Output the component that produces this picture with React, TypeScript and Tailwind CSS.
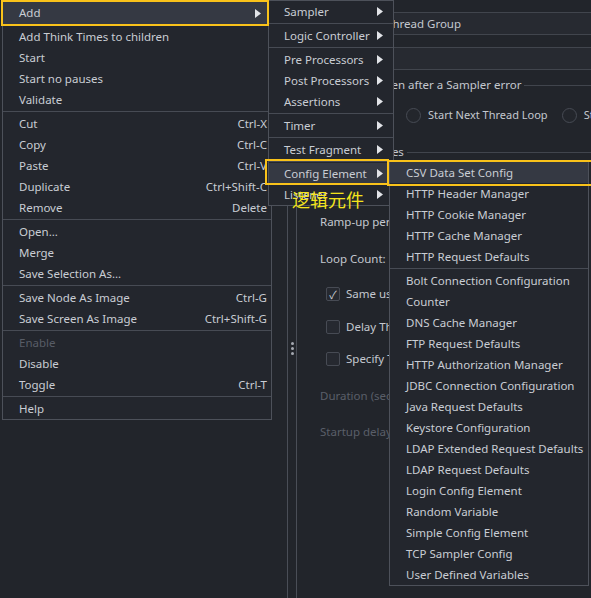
import React from 'react';

type Entry =
  | { label: string; keys?: string; sub?: boolean; disabled?: boolean; active?: boolean }
  | 'sep';

const MAIN: Entry[] = [
  { label: 'Add', sub: true, active: true },
  { label: 'Add Think Times to children' },
  { label: 'Start' },
  { label: 'Start no pauses' },
  { label: 'Validate' },
  'sep',
  { label: 'Cut', keys: 'Ctrl-X' },
  { label: 'Copy', keys: 'Ctrl-C' },
  { label: 'Paste', keys: 'Ctrl-V' },
  { label: 'Duplicate', keys: 'Ctrl+Shift-C' },
  { label: 'Remove', keys: 'Delete' },
  'sep',
  { label: 'Open...' },
  { label: 'Merge' },
  { label: 'Save Selection As...' },
  'sep',
  { label: 'Save Node As Image', keys: 'Ctrl-G' },
  { label: 'Save Screen As Image', keys: 'Ctrl+Shift-G' },
  'sep',
  { label: 'Enable', disabled: true },
  { label: 'Disable' },
  { label: 'Toggle', keys: 'Ctrl-T' },
  'sep',
  { label: 'Help' },
];

const ADD: Entry[] = [
  { label: 'Sampler', sub: true },
  'sep',
  { label: 'Logic Controller', sub: true },
  'sep',
  { label: 'Pre Processors', sub: true },
  { label: 'Post Processors', sub: true },
  { label: 'Assertions', sub: true },
  'sep',
  { label: 'Timer', sub: true },
  'sep',
  { label: 'Test Fragment', sub: true },
  'sep',
  { label: 'Config Element', sub: true, active: true },
  { label: 'Listener', sub: true },
];

const CONFIG: Entry[] = [
  { label: 'CSV Data Set Config', active: true },
  { label: 'HTTP Header Manager' },
  { label: 'HTTP Cookie Manager' },
  { label: 'HTTP Cache Manager' },
  { label: 'HTTP Request Defaults' },
  'sep',
  { label: 'Bolt Connection Configuration' },
  { label: 'Counter' },
  { label: 'DNS Cache Manager' },
  { label: 'FTP Request Defaults' },
  { label: 'HTTP Authorization Manager' },
  { label: 'JDBC Connection Configuration' },
  { label: 'Java Request Defaults' },
  { label: 'Keystore Configuration' },
  { label: 'LDAP Extended Request Defaults' },
  { label: 'LDAP Request Defaults' },
  { label: 'Login Config Element' },
  { label: 'Random Variable' },
  { label: 'Simple Config Element' },
  { label: 'TCP Sampler Config' },
  { label: 'User Defined Variables' },
];

function Arrow() {
  return (
    <svg width="6" height="9" viewBox="0 0 6 9" className="shrink-0">
      <polygon points="0,0 6,4.5 0,9" fill="#e2e4e8" />
    </svg>
  );
}

function MenuList({ items, pad, tall }: { items: Entry[]; pad: string; tall?: boolean }) {
  return (
    <>
      {items.map((it, i) =>
        it === 'sep' ? (
          <div key={i} className="flex h-[3px] items-center">
            <div className="h-px w-full bg-[#474b54]" />
          </div>
        ) : (
          <div
            key={i}
            className={`flex items-center pr-[4px] ${pad} ${it.active ? 'bg-[#353943]' : ''} ${
              it.active && tall ? 'mb-px h-[24px]' : 'h-[21px]'
            } ${it.disabled ? 'text-[#585d67]' : 'text-[#c9cdd4]'}`}
          >
            <span className="flex-1 whitespace-nowrap">{it.label}</span>
            {it.keys && <span className="whitespace-nowrap">{it.keys}</span>}
            {it.sub && (
              <span className="flex w-[12px] justify-start">
                <Arrow />
              </span>
            )}
          </div>
        ),
      )}
    </>
  );
}

function Field({ label }: { label: string }) {
  return (
    <div className="flex h-[23px] items-center">
      <span className="w-[60px] shrink-0">{label}</span>
      <div className="flex h-full flex-1 items-center border-y border-[#41454d] bg-[#272a31] pl-[6px]">
        {label === 'Name:' ? 'Thread Group' : ''}
      </div>
    </div>
  );
}

function Legend({ text, indent }: { text: string; indent: string }) {
  return (
    <div className={`flex h-[16px] items-center gap-[3px] ${indent}`}>
      <span className="whitespace-nowrap">{text}</span>
      <div className="h-px flex-1 bg-[#41454d]" />
    </div>
  );
}

function Radio({ label }: { label: string }) {
  return (
    <div className="flex shrink-0 items-center gap-[7px]">
      <span className="h-[15px] w-[15px] rounded-full border border-[#474b54] bg-[#23262c]" />
      <span className="whitespace-nowrap text-[11px]">{label}</span>
    </div>
  );
}

function Check({ label, on }: { label: string; on?: boolean }) {
  return (
    <div className="flex h-[24px] items-center gap-[6px] pl-[6px]">
      <span className="flex h-[14px] w-[14px] items-center justify-center rounded-[2px] border border-[#474b54] bg-[#262930] text-[11px] leading-none text-[#c9cdd4]">
        {on ? '✓' : ''}
      </span>
      <span className="whitespace-nowrap">{label}</span>
    </div>
  );
}

export default function App() {
  return (
    <div className="relative flex h-[598px] w-[591px] overflow-hidden bg-[#22252b] font-['Noto_Sans','Noto_Sans_CJK_SC',sans-serif] text-[11.5px] text-[#c4c8cf]">
      {/* tree panel + splitter */}
      <div className="w-[288px] shrink-0 border-r border-[#4a4e57]" />
      <div className="flex w-[9px] shrink-0 flex-col items-center gap-[2px] border-r border-[#4a4e57] pt-[342px]">
        <span className="h-[3px] w-[3px] rounded-full bg-[#a4a8b0]" />
        <span className="h-[3px] w-[3px] rounded-full bg-[#a4a8b0]" />
        <span className="h-[3px] w-[3px] rounded-full bg-[#a4a8b0]" />
      </div>

      {/* thread group form */}
      <div className="flex min-w-0 flex-1 flex-col overflow-hidden pl-[23px] pt-[12px]">
        <Field label="Name:" />
        <div className="mt-[12px]">
          <Field label="Comments:" />
        </div>
        <div className="mt-[7px]">
          <Legend text="Action to be taken after a Sampler error" indent="-ml-[13px]" />
        </div>
        <div className="mt-[12px] flex h-[20px] items-center gap-[14px] pl-[3px]">
          <Radio label="Continue" />
          <Radio label="Start Next Thread Loop" />
          <Radio label="Stop Thread" />
        </div>
        <div className="mt-[19px]">
          <Legend text="Thread Properties" indent="-ml-[13px]" />
        </div>
        <div className="mt-[13px] flex h-[24px] items-center">Number of Threads (users):</div>
        <div className="mt-[13px] flex h-[24px] items-center">Ramp-up period (seconds):</div>
        <div className="mt-[13px] flex h-[24px] items-center">Loop Count:</div>
        <div className="mt-[11px]">
          <Check label="Same user on each iteration" on />
        </div>
        <div className="mt-[9px]">
          <Check label="Delay Thread creation until needed" />
        </div>
        <div className="mt-[8px]">
          <Check label="Specify Thread lifetime" />
        </div>
        <div className="mt-[13px] flex h-[24px] items-center text-[#5a5f69]">Duration (seconds):</div>
        <div className="mt-[12px] flex h-[24px] items-center text-[#5a5f69]">Startup delay (seconds):</div>
      </div>

      {/* popup menus */}
      <div className="absolute left-[2px] top-0 w-[270px] border border-[#4d515a] bg-[#23262d]">
        <MenuList items={MAIN} pad="pl-[16px]" tall />
      </div>
      <div className="absolute left-[268px] top-0 w-[126px] border border-[#4d515a] bg-[#23262d]">
        <MenuList items={ADD} pad="pl-[15px]" />
      </div>
      <div className="absolute left-[389px] top-[161px] w-[200px] border border-[#4d515a] bg-[#23262d]">
        <MenuList items={CONFIG} pad="pl-[16px]" />
      </div>

      {/* annotation overlay */}
      <div className="pointer-events-none absolute left-[1px] top-0 h-[26px] w-[268px] border-2 border-[#f9c21a]" />
      <div className="pointer-events-none absolute left-[265px] top-[159px] h-[26px] w-[124px] border-2 border-[#f9c21a]" />
      <div className="pointer-events-none absolute left-[387px] top-[160px] h-[26px] w-[210px] border-2 border-[#f9c21a]" />
      <div className="pointer-events-none absolute left-[292px] top-[186px] font-['Noto_Sans_CJK_SC',sans-serif] text-[18px] leading-[26px] text-[#f4e41c]">
        逻辑元件
      </div>
    </div>
  );
}
